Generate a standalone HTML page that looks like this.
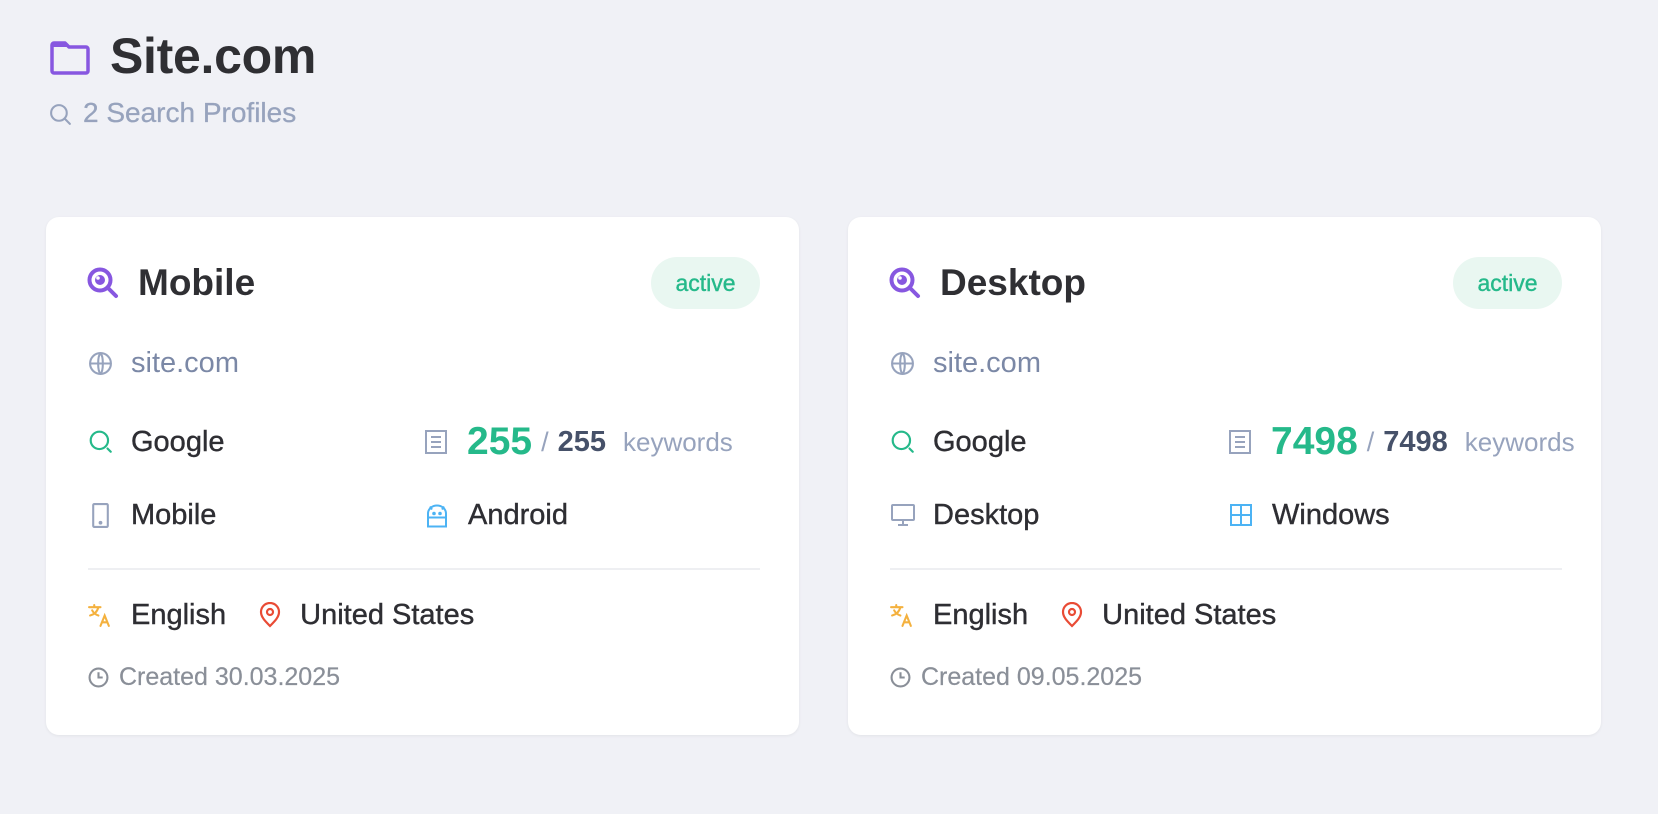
<!DOCTYPE html>
<html><head><meta charset="utf-8"><style>
*{margin:0;padding:0;box-sizing:border-box}
body{width:1658px;height:814px;background:#f0f1f6;font-family:"Liberation Sans",sans-serif;position:relative;overflow:hidden}
.abs{position:absolute}
.card{position:absolute;top:217px;width:753px;height:518px;background:#fff;border-radius:13px;box-shadow:0 1px 3px rgba(0,0,0,0.06)}
.row{position:absolute;display:flex;align-items:center;height:40px;transform:translateY(-50%);white-space:nowrap}
.lbl{font-size:29px;color:#2e2e33;-webkit-text-stroke:0.4px #2e2e33}
svg{display:block}
</style></head><body>

<svg class="abs" style="left:50px;top:40px" width="40" height="36" viewBox="0 0 40 36"><path d="M4 3h11l4 4h17a2 2 0 0 1 2 2v22a2 2 0 0 1-2 2H4a2 2 0 0 1-2-2V5a2 2 0 0 1 2-2z" fill="none" stroke="#8757e0" stroke-width="3.5" stroke-linejoin="round"/><path d="M2 5a2 2 0 0 1 2-2h11l4 4H2z" fill="#8757e0"/></svg>
<div class="abs" style="left:110px;top:27px;font-size:50px;font-weight:700;color:#2f2f33;letter-spacing:-0.3px">Site.com</div>
<svg class="abs" style="left:48px;top:102px" width="25" height="25" viewBox="0 0 24 24"><circle cx="10.5" cy="10.5" r="7.5" fill="none" stroke="#97a3bd" stroke-width="2"/><path d="M16 16l5 5" stroke="#97a3bd" stroke-width="2" stroke-linecap="round"/></svg>
<div class="abs" style="left:83px;top:97px;font-size:28px;color:#97a3bd;-webkit-text-stroke:0.3px #97a3bd">2 Search Profiles</div>

<div class="card" style="left:46px">
  <svg class="abs" style="left:40px;top:49px" width="34" height="34" viewBox="0 0 34 34"><circle cx="14" cy="14" r="10.5" fill="none" stroke="#8757e0" stroke-width="4"/><circle cx="14" cy="14" r="5" fill="#8757e0"/><circle cx="12" cy="12" r="1.8" fill="#fff"/><path d="M22 22l8 8" stroke="#8757e0" stroke-width="4" stroke-linecap="round"/></svg>
  <div class="abs" style="left:92px;top:45px;font-size:37px;font-weight:700;color:#2f2f33">Mobile</div>
  <div class="abs" style="left:605px;top:40px;width:109px;height:52px;border-radius:26px;background:#e9f7f1;color:#25b98a;font-size:23px;display:flex;align-items:center;justify-content:center;-webkit-text-stroke:0.4px #25b98a">active</div>

  <div class="row" style="left:42px;top:146px"><svg width="25" height="25" viewBox="0 0 24 24" fill="none" stroke="#97a3bd" stroke-width="2"><circle cx="12" cy="12" r="10"/><path d="M2 12h20M12 2c3 3 3 17 0 20M12 2c-3 3-3 17 0 20"/></svg><span style="margin-left:18px;font-size:29px;color:#7b88a6">site.com</span></div>

  <div class="row" style="left:42px;top:225px"><svg width="26" height="26" viewBox="0 0 24 24" fill="none" stroke="#25b98a" stroke-width="2"><circle cx="10.5" cy="10.5" r="8"/><path d="M18 18l3 3" stroke-linecap="round"/></svg><span class="lbl" style="margin-left:17px">Google</span></div>
  <div class="row" style="left:379px;top:225px"><svg width="22" height="24" viewBox="0 0 22 24" fill="none" stroke="#97a3bd" stroke-width="2"><rect x="1" y="1" width="20" height="22"/><path d="M6 7h10M6 12h10M6 17h10"/></svg><span style="margin-left:20px;font-size:39px;font-weight:700;color:#25b98a">255</span><span style="margin-left:9px;font-size:27px;color:#97a3bd">/</span><span style="margin-left:9px;font-size:29px;color:#465169;font-weight:700">255</span><span style="margin-left:17px;font-size:26px;color:#97a3bd">keywords</span></div>

  <div class="row" style="left:42px;top:298px"><svg width="25" height="25" viewBox="0 0 24 24" fill="none" stroke="#97a3bd" stroke-width="2"><rect x="5" y="1" width="14" height="22" rx="1"/><circle cx="12" cy="19" r="0.8" fill="#97a3bd"/></svg><span class="lbl" style="margin-left:18px">Mobile</span></div>
  <div class="row" style="left:379px;top:298px"><svg width="24" height="25" viewBox="0 0 24 24" fill="none" stroke="#4cb3f4" stroke-width="2"><path d="M3 10a9 8 0 0 1 18 0v13H3zM3 14h18M5 3l2 3M19 3l-2 3"/><circle cx="9" cy="10" r="0.8" fill="#4cb3f4"/><circle cx="15" cy="10" r="0.8" fill="#4cb3f4"/></svg><span class="lbl" style="margin-left:19px">Android</span></div>

  <div class="abs" style="left:42px;top:351px;width:672px;height:2px;background:#eeeff2"></div>

  <div class="row" style="left:42px;top:398px"><svg width="25" height="25" viewBox="0 0 24 24" fill="none" stroke="#f4b13e" stroke-width="2" stroke-linecap="round"><path d="M1 4h11M6 2v2M10 4c-1 4-4 7-8 8M4 7c1 2 3 4 6 5M12 22l4-10 4 10M13.5 18.5h5"/></svg><span class="lbl" style="margin-left:18px">English</span>
  <svg style="margin-left:33px" width="22" height="26" viewBox="0 0 22 26" fill="none" stroke="#e94b35" stroke-width="2.2"><path d="M11 24c-5-5-9-9-9-14a9 9 0 0 1 18 0c0 5-4 9-9 14z"/><circle cx="11" cy="10" r="3"/></svg><span class="lbl" style="margin-left:19px">United States</span></div>

  <div class="row" style="left:42px;top:460px"><svg width="21" height="21" viewBox="0 0 20 20" fill="none" stroke="#8a8f98" stroke-width="2"><circle cx="10" cy="10" r="8.5"/><path d="M10 5v5h4"/></svg><span style="margin-left:10px;font-size:25px;color:#8a8f98;-webkit-text-stroke:0.2px #8a8f98">Created 30.03.2025</span></div>
</div>

<div class="card" style="left:848px">
  <svg class="abs" style="left:40px;top:49px" width="34" height="34" viewBox="0 0 34 34"><circle cx="14" cy="14" r="10.5" fill="none" stroke="#8757e0" stroke-width="4"/><circle cx="14" cy="14" r="5" fill="#8757e0"/><circle cx="12" cy="12" r="1.8" fill="#fff"/><path d="M22 22l8 8" stroke="#8757e0" stroke-width="4" stroke-linecap="round"/></svg>
  <div class="abs" style="left:92px;top:45px;font-size:37px;font-weight:700;color:#2f2f33">Desktop</div>
  <div class="abs" style="left:605px;top:40px;width:109px;height:52px;border-radius:26px;background:#e9f7f1;color:#25b98a;font-size:23px;display:flex;align-items:center;justify-content:center;-webkit-text-stroke:0.4px #25b98a">active</div>

  <div class="row" style="left:42px;top:146px"><svg width="25" height="25" viewBox="0 0 24 24" fill="none" stroke="#97a3bd" stroke-width="2"><circle cx="12" cy="12" r="10"/><path d="M2 12h20M12 2c3 3 3 17 0 20M12 2c-3 3-3 17 0 20"/></svg><span style="margin-left:18px;font-size:29px;color:#7b88a6">site.com</span></div>

  <div class="row" style="left:42px;top:225px"><svg width="26" height="26" viewBox="0 0 24 24" fill="none" stroke="#25b98a" stroke-width="2"><circle cx="10.5" cy="10.5" r="8"/><path d="M18 18l3 3" stroke-linecap="round"/></svg><span class="lbl" style="margin-left:17px">Google</span></div>
  <div class="row" style="left:381px;top:225px"><svg width="22" height="24" viewBox="0 0 22 24" fill="none" stroke="#97a3bd" stroke-width="2"><rect x="1" y="1" width="20" height="22"/><path d="M6 7h10M6 12h10M6 17h10"/></svg><span style="margin-left:20px;font-size:39px;font-weight:700;color:#25b98a">7498</span><span style="margin-left:9px;font-size:27px;color:#97a3bd">/</span><span style="margin-left:9px;font-size:29px;color:#465169;font-weight:700">7498</span><span style="margin-left:17px;font-size:26px;color:#97a3bd">keywords</span></div>

  <div class="row" style="left:42px;top:298px"><svg width="26" height="24" viewBox="0 0 26 24" fill="none" stroke="#97a3bd" stroke-width="2"><rect x="2" y="2" width="22" height="15" rx="1"/><path d="M13 17v5M8 22h10"/></svg><span class="lbl" style="margin-left:17px">Desktop</span></div>
  <div class="row" style="left:381px;top:298px"><svg width="24" height="24" viewBox="0 0 24 24" fill="none" stroke="#4cb3f4" stroke-width="2"><rect x="2" y="2" width="20" height="20"/><path d="M2 12h20M12 2v20"/></svg><span class="lbl" style="margin-left:19px">Windows</span></div>

  <div class="abs" style="left:42px;top:351px;width:672px;height:2px;background:#eeeff2"></div>

  <div class="row" style="left:42px;top:398px"><svg width="25" height="25" viewBox="0 0 24 24" fill="none" stroke="#f4b13e" stroke-width="2" stroke-linecap="round"><path d="M1 4h11M6 2v2M10 4c-1 4-4 7-8 8M4 7c1 2 3 4 6 5M12 22l4-10 4 10M13.5 18.5h5"/></svg><span class="lbl" style="margin-left:18px">English</span>
  <svg style="margin-left:33px" width="22" height="26" viewBox="0 0 22 26" fill="none" stroke="#e94b35" stroke-width="2.2"><path d="M11 24c-5-5-9-9-9-14a9 9 0 0 1 18 0c0 5-4 9-9 14z"/><circle cx="11" cy="10" r="3"/></svg><span class="lbl" style="margin-left:19px">United States</span></div>

  <div class="row" style="left:42px;top:460px"><svg width="21" height="21" viewBox="0 0 20 20" fill="none" stroke="#8a8f98" stroke-width="2"><circle cx="10" cy="10" r="8.5"/><path d="M10 5v5h4"/></svg><span style="margin-left:10px;font-size:25px;color:#8a8f98;-webkit-text-stroke:0.2px #8a8f98">Created 09.05.2025</span></div>
</div>
</body></html>
